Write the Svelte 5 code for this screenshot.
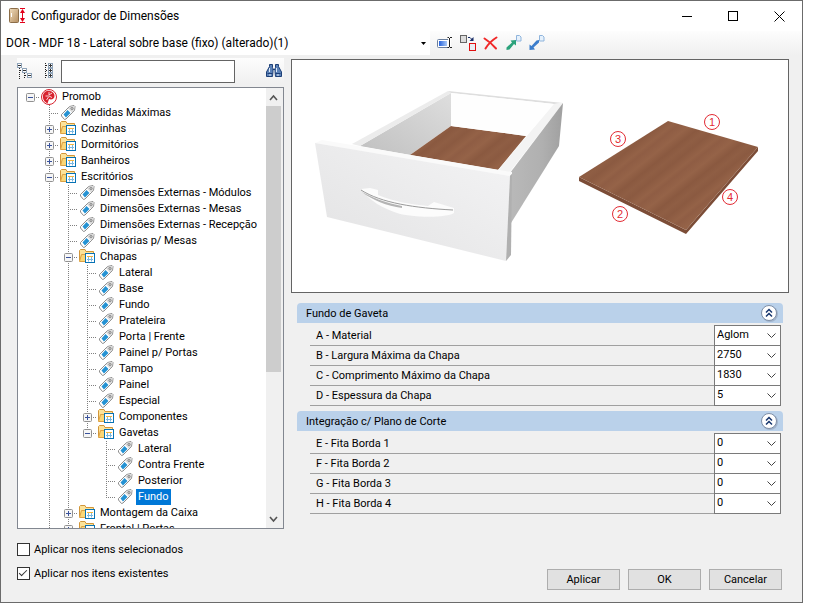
<script>
  let perfis = ["DOR - MDF 18 - Lateral sobre base (fixo) (alterado)(1)"];
  let perfil = perfis[0];
  let busca = "";
  let selecionado = "Fundo-4";
  let nosSelecionados = false;
  let nosExistentes = true;

  // tipo: "raiz", "pasta" ou "etiqueta"
  let itens = [
    { nome: "Promob", nivel: 0, tipo: "raiz", aberto: true, ultimo: true },
    { nome: "Medidas Máximas", nivel: 1, tipo: "etiqueta" },
    { nome: "Cozinhas", nivel: 1, tipo: "pasta" },
    { nome: "Dormitórios", nivel: 1, tipo: "pasta" },
    { nome: "Banheiros", nivel: 1, tipo: "pasta" },
    { nome: "Escritórios", nivel: 1, tipo: "pasta", aberto: true },
    { nome: "Dimensões Externas - Módulos", nivel: 2, tipo: "etiqueta" },
    { nome: "Dimensões Externas - Mesas", nivel: 2, tipo: "etiqueta" },
    { nome: "Dimensões Externas - Recepção", nivel: 2, tipo: "etiqueta" },
    { nome: "Divisórias p/ Mesas", nivel: 2, tipo: "etiqueta" },
    { nome: "Chapas", nivel: 2, tipo: "pasta", aberto: true },
    { nome: "Lateral", nivel: 3, tipo: "etiqueta" },
    { nome: "Base", nivel: 3, tipo: "etiqueta" },
    { nome: "Fundo", nivel: 3, tipo: "etiqueta" },
    { nome: "Prateleira", nivel: 3, tipo: "etiqueta" },
    { nome: "Porta | Frente", nivel: 3, tipo: "etiqueta" },
    { nome: "Painel p/ Portas", nivel: 3, tipo: "etiqueta" },
    { nome: "Tampo", nivel: 3, tipo: "etiqueta" },
    { nome: "Painel", nivel: 3, tipo: "etiqueta" },
    { nome: "Especial", nivel: 3, tipo: "etiqueta" },
    { nome: "Componentes", nivel: 3, tipo: "pasta" },
    { nome: "Gavetas", nivel: 3, tipo: "pasta", aberto: true, ultimo: true },
    { nome: "Lateral", nivel: 4, tipo: "etiqueta" },
    { nome: "Contra Frente", nivel: 4, tipo: "etiqueta" },
    { nome: "Posterior", nivel: 4, tipo: "etiqueta" },
    { nome: "Fundo", nivel: 4, tipo: "etiqueta", ultimo: true },
    { nome: "Montagem da Caixa", nivel: 2, tipo: "pasta" },
    { nome: "Frontal | Portas", nivel: 2, tipo: "pasta" }
  ];

  let grupos = [
    {
      titulo: "Fundo de Gaveta",
      aberto: true,
      campos: [
        { nome: "A - Material", valor: "Aglom" },
        { nome: "B - Largura Máxima da Chapa", valor: "2750" },
        { nome: "C - Comprimento Máximo da Chapa", valor: "1830" },
        { nome: "D - Espessura da Chapa", valor: "5" }
      ]
    },
    {
      titulo: "Integração c/ Plano de Corte",
      aberto: true,
      campos: [
        { nome: "E - Fita Borda 1", valor: "0" },
        { nome: "F - Fita Borda 2", valor: "0" },
        { nome: "G - Fita Borda 3", valor: "0" },
        { nome: "H - Fita Borda 4", valor: "0" }
      ]
    }
  ];

  let marcas = [
    { n: 1, x: 420, y: 62 },
    { n: 2, x: 328, y: 154 },
    { n: 3, x: 326, y: 79 },
    { n: 4, x: 438, y: 137 }
  ];

  function chave(item) {
    return item.nome + "-" + item.nivel;
  }

  // so os niveis 1 e 2 continuam abaixo dos filhos
  function guias(item) {
    let lista = [];
    for (let i = 0; i < item.nivel; i++) {
      lista.push(i === 1 || i === 2);
    }
    return lista;
  }

  function alternarGrupo(grupo) {
    grupo.aberto = !grupo.aberto;
    grupos = grupos;
  }
</script>

<div class="janela">
  <header class="titulo">
    <svg class="logo" width="18" height="16" viewBox="0 0 18 16">
      <defs>
        <linearGradient id="porta" x1="0" y1="0" x2="1" y2="1">
          <stop offset="0" stop-color="#f0dcbc" />
          <stop offset="1" stop-color="#b48e60" />
        </linearGradient>
      </defs>
      <rect x="0.5" y="0.5" width="9" height="14" rx="1" fill="url(#porta)" stroke="#8b6d48" />
      <path d="M2.500 5v4" stroke="#fff" />
      <path d="M11 .5h5M11 14.500h5M13.500 2v11" stroke="#e2001a" />
      <path d="M13.500 1l2.500 4h-5zM13.500 14l2.500-4h-5z" fill="#e2001a" />
    </svg>
    <h1>Configurador de Dimensões</h1>
    <div class="controles">
      <button aria-label="Minimizar"><svg width="11" height="11"><path d="M0 5.500h10" stroke="#000" /></svg></button>
      <button aria-label="Maximizar"><svg width="11" height="11"><rect x=".5" y=".5" width="9" height="9" fill="none" stroke="#000" /></svg></button>
      <button aria-label="Fechar"><svg width="11" height="11"><path d="M.5.500l10 10M10.500.500l-10 10" stroke="#000" /></svg></button>
    </div>
  </header>

  <div class="barra">
    <select class="perfil" aria-label="Perfil" bind:value={perfil}>
      {#each perfis as p}
        <option value={p}>{p}</option>
      {/each}
    </select>
    <button aria-label="Renomear">
      <svg width="16" height="16" viewBox="0 0 16 16">
        <defs>
          <linearGradient id="azul"><stop offset="0" stop-color="#2864dc" /><stop offset="1" stop-color="#a9c9f8" /></linearGradient>
        </defs>
        <rect x=".5" y="4.500" width="12" height="8" rx="1" fill="#fff" stroke="#6b7f9e" />
        <rect x="2" y="6" width="8" height="5" fill="url(#azul)" />
        <path d="M12.500 3v9" stroke="#fff" stroke-width="3" />
        <path d="M12.500 3v9M10.500 2.500h1.500M13 2.500h2M10.500 12.500h1.500M13 12.500h2" stroke="#222" />
      </svg>
    </button>
    <button aria-label="Substituir">
      <svg width="16" height="16" viewBox="0 0 16 16">
        <rect x=".5" y=".5" width="6" height="7" fill="#dcdcdc" stroke="#666" />
        <rect x="9.500" y="8.500" width="6" height="7" fill="#e8eef4" stroke="#e01010" />
        <path d="M8 2.500h2l2.500 2.500" fill="none" stroke="#152a66" />
        <path d="M13.500 2v4h-4z" fill="#152a66" />
      </svg>
    </button>
    <button aria-label="Excluir">
      <svg width="16" height="16" viewBox="0 0 16 16">
        <path d="M1.500 3.500c4 2.500 7.500 5.500 11.500 10M13.500 2.500C8.500 5.500 5 9.500 2.500 13.500" fill="none" stroke="#f02828" stroke-width="2" stroke-linecap="round" />
      </svg>
    </button>
    <button aria-label="Exportar">
      <svg width="16" height="16" viewBox="0 0 16 16">
        <path d="M10.500.500h3l1.500 1.500v4h-4.500z" fill="#e6f1fc" stroke="#8fb4dc" />
        <path d="M10 5v5.500L8 9l-4.500 5.500L.5 15v-2.500L6 7.500 4.500 5.500z" fill="#2ba27b" />
      </svg>
    </button>
    <button aria-label="Importar">
      <svg width="16" height="16" viewBox="0 0 16 16">
        <path d="M10.500.500h3l1.500 1.500v4h-4.500z" fill="#e6f1fc" stroke="#8fb4dc" />
        <path d="M.5 15V9.500L2.500 11l5-5.500 2.500-.5v2.500l-5.500 5 1.500 2z" fill="#3b7dcc" />
      </svg>
    </button>
  </div>

  <main>
    <section class="esquerda">
      <div class="ferramentas">
        <button aria-label="Recolher tudo">
          <svg width="16" height="16" viewBox="0 0 16 16">
            <path d="M2.500 5v11M3 7.500h3M7.500 10v6M8 12.500h3" fill="none" stroke="#222" stroke-dasharray="1 1" />
            <g fill="#fff" stroke="#8fa3b8"><rect x=".5" y=".5" width="4" height="4" /><rect x="5.500" y="5.500" width="4" height="4" /><rect x="10.500" y="10.500" width="4" height="4" /></g>
            <path d="M1 2.500h3M6 7.500h3M11 12.500h3" stroke="#333" />
          </svg>
        </button>
        <button aria-label="Expandir tudo">
          <svg width="16" height="16" viewBox="0 0 16 16">
            <path d="M2.500 0v16M3 2.500h2M3 7.500h2M3 12.500h2" fill="none" stroke="#222" stroke-dasharray="1 1" />
            <g fill="#fff" stroke="#8fa3b8"><rect x="5.500" y=".5" width="4" height="4" /><rect x="5.500" y="5.500" width="4" height="4" /><rect x="5.500" y="10.500" width="4" height="4" /></g>
            <path d="M6 2.500h3M7.500 1v3M6 7.500h3M7.500 6v3M6 12.500h3M7.500 11v3" stroke="#333" />
          </svg>
        </button>
        <input type="text" aria-label="Pesquisar" bind:value={busca} />
        <button class="pesquisar" aria-label="Procurar">
          <svg width="16" height="16" viewBox="0 0 16 16">
            <g fill="#5c82b8" stroke="#1d3f77">
              <path d="M3.500 3.500v-2h3v3l.5 1v3l-.5 5h-6V9zM12.500 3.500v-2h-3v3l-.5 1v3l.5 5h6V9z" />
            </g>
            <path d="M7 6.500h2M1.500 10.500h5M9.500 10.500h5" stroke="#1d3f77" />
            <path d="M3.500 5v4M10.500 5v4M3 12h2M11 12h2" stroke="#dce9f8" />
          </svg>
        </button>
      </div>

      <div class="arvore">
        <ul role="tree">
          {#each itens as item}
            <li role="treeitem" aria-selected={selecionado === chave(item)}>
              {#each guias(item) as continua}
                <span class="guia" class:linha={continua}></span>
              {/each}
              <span class="guia" class:ramo={item.nivel > 0} class:fim={item.ultimo && item.nivel > 0} class:inicio={item.nivel === 0}>
                {#if item.tipo !== "etiqueta"}
                  <button class="expansor" aria-label={item.aberto ? "Recolher" : "Expandir"}>
                    <svg width="9" height="9" viewBox="0 0 9 9">
                      <rect x=".5" y=".5" width="8" height="8" rx="1" fill="#f6f6f6" stroke="#919191" />
                      <path d={item.aberto ? "M2 4.500h5" : "M2 4.500h5M4.500 2v5"} stroke="#39529c" />
                    </svg>
                  </button>
                {/if}
              </span>
              <svg class="icone" width="16" height="16" viewBox="0 0 16 16">
                {#if item.tipo === "raiz"}
                  <circle cx="8" cy="8" r="7.500" fill="#fff" stroke="#d8232f" />
                  <path d="M6.500 14.500C1 12 .5 5 4.500 2.500 8.500.500 13.500 3 13.500 7c0 3-3 4-5.500 3z" fill="#d8232f" />
                  <path d="M8 3v3l3-2M8 7H4.500M8 7l3 1.500M7.500 8l-2 3" fill="none" stroke="#fff" stroke-width=".8" />
                {:else if item.tipo === "pasta"}
                  <path d="M.5 11.500v-10l1-1H6l1 2h7.500v9z" fill="#fce39a" stroke="#d2963a" />
                  <path d="M.5 12.500l2-7h4l1-1h7v8z" fill="#fbd777" stroke="#dca143" />
                  <rect x="6.500" y="4.500" width="9" height="9" fill="#fff" stroke="#0873b5" />
                  <path d="M8 7.500h6" stroke="#f3b53d" />
                  <path d="M8 10.500h6M9.500 8v4.500M12.500 8v4.500" stroke="#7ab8e0" />
                {:else}
                  <path d="M1.500 9.500L9.500 1.500l4.500-1 1 1-.5 4-8.500 8.500-1.500.5-3-3.500z" fill="#fff" stroke="#8d8d8d" />
                  <path d="M9.500 2l4.500-1 .5.500-.5 4-2 2-4-4z" fill="#d9d9d9" />
                  <path d="M7.500 5l3 3-4.500 4.500-2.500-3z" fill="#2492d3" />
                  <circle cx="12" cy="3.500" r="1" fill="#fff" stroke="#777" />
                {/if}
              </svg>
              <button
                class="rotulo"
                class:selecionado={selecionado === chave(item)}
                onclick={() => (selecionado = chave(item))}>{item.nome}</button>
            </li>
          {/each}
        </ul>
        <div class="rolagem">
          <svg width="15" height="18" viewBox="0 0 15 18"><path d="M4 12l3.500-4 3.500 4" fill="none" stroke="#555" stroke-width="1.600" /></svg>
          <div class="polegar"></div>
          <svg width="15" height="18" viewBox="0 0 15 18"><path d="M4 7l3.500 4L11 7" fill="none" stroke="#555" stroke-width="1.600" /></svg>
        </div>
      </div>

      <div class="opcoes">
        <label><input type="checkbox" bind:checked={nosSelecionados} /> Aplicar nos itens selecionados</label>
        <label><input type="checkbox" bind:checked={nosExistentes} /> Aplicar nos itens existentes</label>
      </div>
    </section>

    <section class="direita">
      <div class="previa">
        <svg viewBox="0 0 496 232" role="img" aria-label="Gaveta e fundo">
          <defs>
            <linearGradient id="frente" x1="1" y1="0" x2="0" y2="1">
              <stop offset="0" stop-color="#f4f4f5" /><stop offset="1" stop-color="#e2e2e3" />
            </linearGradient>
            <linearGradient id="lado" x1="0" y1="0" x2="1" y2="0">
              <stop offset="0" stop-color="#b9b9b9" /><stop offset=".6" stop-color="#b0b0b0" /><stop offset="1" stop-color="#a0a0a0" />
            </linearGradient>
            <linearGradient id="interno" x1="0" y1="1" x2="1" y2="0">
              <stop offset="0" stop-color="#c0c0c0" /><stop offset="1" stop-color="#dedede" />
            </linearGradient>
            <linearGradient id="madeira" gradientUnits="userSpaceOnUse" x1="0" y1="0" x2="24" y2="30" spreadMethod="repeat">
              <stop offset="0" stop-color="#8a5940" /><stop offset=".15" stop-color="#8f5e44" /><stop offset=".3" stop-color="#8b5a41" />
              <stop offset=".5" stop-color="#946247" /><stop offset=".6" stop-color="#8f5d44" /><stop offset=".8" stop-color="#956348" /><stop offset="1" stop-color="#8a5940" />
            </linearGradient>
          </defs>
          <path d="M68 86L159 33v33l-41 29z" fill="url(#interno)" />
          <path d="M118 95l41-29 75 10-28 34z" fill="url(#madeira)" />
          <path d="M60 84l96-53 3 2-91 53z" fill="#ececec" />
          <path d="M156 31l115 12-9 1-103-11z" fill="#dedede" />
          <path d="M159 33l103 11-28 32-75-10z" fill="#fefefe" />
          <path d="M206 110l56-66 9-1-54 70z" fill="#f3f3f3" />
          <path d="M218 113l53-70-4 43-48 77z" fill="url(#lado)" />
          <path d="M23 83l7-3 190 32v2l-2 2z" fill="#fafafa" />
          <path d="M23 83l195 33-4 85-179-44z" fill="url(#frente)" />
          <path d="M218 116l2-2-1 81-5 6z" fill="#b0b0b0" />
          <path d="M69 129l9-1 8 2v5c18 7 31 9 50 11l6-4 20 6v5c-8 5-40 5-57 0-15-5-26-12-35-22z" fill="#fcfcfc" />
          <path d="M70 132c14 7 24 11 40 14v2c-15-2-30-8-40-16z" fill="#b4b4b4" />
          <path d="M69 130c20 13 54 18 92 20" fill="none" stroke="#9a9a9a" />
          <path d="M287 117l107 53 72-83v4l-72 83-107-53z" fill="#7c4d37" />
          <path d="M287 117l89-56 90 26-72 83z" fill="url(#madeira)" />
          {#each marcas as m}
            <circle cx={m.x} cy={m.y} r="7.500" fill="none" stroke="#e22b34" />
            <text x={m.x} y={m.y + 4}>{m.n}</text>
          {/each}
        </svg>
      </div>

      <div class="grupos">
        {#each grupos as grupo, g}
          <div class="grupo">
            <div class="cabecalho">
              <h2>{grupo.titulo}</h2>
              <button aria-label="Recolher grupo" onclick={() => alternarGrupo(grupo)}>
                <svg width="19" height="19" viewBox="0 0 19 19">
                  <circle cx="10" cy="10" r="8" fill="#8795ad" opacity=".5" />
                  <circle cx="9" cy="9" r="7.500" fill="#fff" stroke="#7f90a8" />
                  <path d="M6 8.500l3-3 3 3M6 12.500l3-3 3 3" fill="none" stroke="#17366e" stroke-width="1.500" />
                </svg>
              </button>
            </div>
            {#if grupo.aberto}
              <div class="campos">
                {#each grupo.campos as campo, c}
                  <div class="campo">
                    <label for="campo-{g}-{c}">{campo.nome}</label>
                    <select id="campo-{g}-{c}" bind:value={campo.valor}>
                      <option value={campo.valor}>{campo.valor}</option>
                    </select>
                  </div>
                {/each}
              </div>
            {/if}
          </div>
        {/each}
      </div>

      <div class="acoes">
        <button>Aplicar</button>
        <button>OK</button>
        <button>Cancelar</button>
      </div>
    </section>
  </main>
</div>

<style>
  :global(body) {
    margin: 0;
    background: #fff;
  }

  .janela {
    display: flex;
    flex-direction: column;
    box-sizing: border-box;
    height: calc(100vh - 8px);
    margin-right: 11px;
    border: 1px solid #6b6b6b;
    background: #f0f0f0;
    color: #000;
    font-family: Roboto, "Liberation Sans", sans-serif;
    font-size: 11px;
  }

  button,
  input,
  select {
    font: inherit;
    color: inherit;
    border-radius: 0;
  }

  button {
    padding: 0;
    border: 0;
    background: none;
  }

  svg {
    display: block;
  }

  .titulo {
    display: flex;
    align-items: center;
    height: 30px;
    padding-left: 8px;
    background: #fff;
  }

  h1 {
    flex: 1;
    margin: 0 0 0 4px;
    font-size: 12px;
    font-weight: 400;
  }

  .controles {
    display: flex;
  }

  .controles button {
    display: flex;
    align-items: center;
    justify-content: center;
    width: 46px;
    height: 30px;
  }

  .barra {
    display: flex;
    align-items: center;
    gap: 7px;
    height: 24px;
    background: linear-gradient(#fdfdfd, #f0f0f0);
  }

  .perfil {
    appearance: none;
    width: calc(54% - 4px);
    height: 24px;
    padding: 0 16px 0 5px;
    border: 0;
    background: #fff url("data:image/svg+xml,%3Csvg xmlns='http://www.w3.org/2000/svg' width='5' height='3'%3E%3Cpath d='M0 0h5L2.5 3z'/%3E%3C/svg%3E") no-repeat right 4px center;
    font-size: 12px;
  }

  main {
    display: flex;
    flex: 1;
    min-height: 0;
    padding: 3px 13px 12px 16px;
    gap: 7px;
  }

  .esquerda {
    display: flex;
    flex-direction: column;
    flex-shrink: 0;
    width: 267px;
  }

  .ferramentas {
    display: flex;
    align-items: center;
    gap: 10px;
    height: 26px;
    margin-bottom: 3px;
    background: linear-gradient(#fdfdfd, #f0f0f0);
  }

  .ferramentas input {
    box-sizing: border-box;
    width: 174px;
    height: 23px;
    margin-left: -8px;
    border: 1px solid #646464;
    background: #fff;
  }

  .pesquisar {
    margin-left: auto;
    margin-right: 2px;
  }

  .arvore {
    display: flex;
    flex: 1;
    min-height: 0;
    border: 1px solid #828790;
    background: #fff;
    overflow: hidden;
  }

  ul {
    flex: 1;
    min-width: 0;
    margin: 0;
    padding: 1px 0 0 3px;
    list-style: none;
  }

  li {
    display: flex;
    height: 16px;
  }

  .guia {
    width: 19px;
    height: 16px;
    background-repeat: no-repeat;
  }

  .linha {
    background-image: repeating-linear-gradient(#808080 0 1px, transparent 1px 2px);
    background-size: 1px 16px;
    background-position: 9px 0;
  }

  .inicio {
    background-image: repeating-linear-gradient(90deg, #808080 0 1px, transparent 1px 2px);
    background-size: 10px 1px;
    background-position: 9px 8px;
  }

  .ramo {
    background-image: repeating-linear-gradient(#808080 0 1px, transparent 1px 2px),
      repeating-linear-gradient(90deg, #808080 0 1px, transparent 1px 2px);
    background-size: 1px 16px, 10px 1px;
    background-position: 9px 0, 9px 8px;
  }

  .ramo.fim {
    background-size: 1px 9px, 10px 1px;
  }

  .expansor {
    display: block;
    margin: 4px 0 0 5px;
  }

  .icone {
    margin: 0 3px 0 1px;
  }

  .rotulo {
    padding: 0 2px;
    line-height: 16px;
    white-space: nowrap;
  }

  .selecionado {
    background: #0078d7;
    color: #fff;
  }

  .rolagem {
    display: flex;
    flex-direction: column;
    flex-shrink: 0;
    width: 17px;
    background: #f0f0f0;
  }

  .polegar {
    width: 15px;
    height: 266px;
    margin-bottom: auto;
    background: #cdcdcd;
  }

  .opcoes {
    display: flex;
    flex-direction: column;
    gap: 8px;
    padding: 12px 0 9px;
  }

  .opcoes label {
    display: flex;
    align-items: center;
    gap: 4px;
    height: 16px;
  }

  .opcoes input {
    appearance: none;
    box-sizing: border-box;
    width: 13px;
    height: 13px;
    margin: 0;
    border: 1px solid #333;
    background: #fff;
  }

  .opcoes input:checked::after {
    content: "";
    display: block;
    width: 7px;
    height: 3px;
    margin: 2px 0 0 1px;
    border: solid #333;
    border-width: 0 0 1px 1px;
    transform: rotate(-45deg);
  }

  .direita {
    display: flex;
    flex: 1;
    flex-direction: column;
    min-width: 0;
  }

  .previa {
    margin-top: 1px;
    border: 1px solid #646464;
    background: #fff;
  }

  .previa svg {
    width: 100%;
  }

  .previa text {
    fill: #e22b34;
    font-family: "Liberation Sans", sans-serif;
    font-size: 11px;
    text-anchor: middle;
  }

  .grupos {
    display: flex;
    flex-direction: column;
    gap: 6px;
    padding: 10px 6px 0;
  }

  .cabecalho {
    display: flex;
    align-items: center;
    justify-content: space-between;
    height: 20px;
    padding: 0 4px 0 9px;
    border-radius: 4px 4px 0 0;
    background: #bad1ea;
  }

  h2 {
    margin: 0;
    font-size: 11px;
    font-weight: 400;
  }

  .campos {
    padding: 2px 2px 0 13px;
  }

  .campo {
    display: flex;
    height: 20px;
  }

  .campo label {
    box-sizing: border-box;
    flex: 1;
    height: 21px;
    padding-left: 6px;
    border-bottom: 1px solid #a0a0a0;
    line-height: 22px;
  }

  .campo select {
    appearance: none;
    box-sizing: border-box;
    width: 67px;
    height: 21px;
    padding: 0 16px 2px 2px;
    border: 1px solid #7a7a7a;
    background: #fff url("data:image/svg+xml,%3Csvg xmlns='http://www.w3.org/2000/svg' width='9' height='6'%3E%3Cpath d='M.5.5l4 4 4-4' fill='none' stroke='%23444'/%3E%3C/svg%3E") no-repeat right 4px center;
  }

  .acoes {
    display: flex;
    justify-content: flex-end;
    gap: 8px;
    margin-top: auto;
    padding-right: 7px;
  }

  .acoes button {
    box-sizing: border-box;
    width: 73px;
    height: 21px;
    border: 1px solid #adadad;
    background: #e1e1e1;
  }
</style>
